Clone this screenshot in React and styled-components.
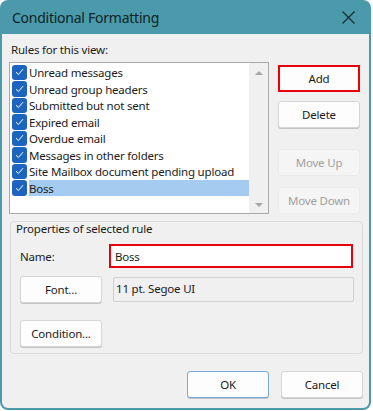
import styled, { createGlobalStyle } from "styled-components";

const GlobalStyle = createGlobalStyle`
  * { margin: 0; padding: 0; box-sizing: border-box; }
  body {
    background: #ffffff;
    font-family: "Noto Sans", "Open Sans", sans-serif;
    font-size: 11.5px;
    letter-spacing: -0.2px;
    color: #1b1b1b;
  }
`;

const Window = styled.div`
  width: 371px;
  height: 410px;
  background: #4a9aab;
  border-radius: 8px;
  padding: 0 2px 2px 2px;
  display: flex;
  flex-direction: column;
  overflow: hidden;
`;

const TitleBar = styled.div`
  height: 34px;
  display: flex;
  align-items: center;
  justify-content: space-between;
  padding: 0 14px 0 10px;
  color: #0f1f24;
  font-size: 14px;
  letter-spacing: -0.25px;
`;

const Body = styled.div`
  flex: 1;
  background: #f0f0f0;
  border-radius: 0 0 6px 6px;
  padding: 8px 9px 0 7px;
  display: flex;
  flex-direction: column;
`;

const Label = styled.div`
  line-height: 16px;
  padding-left: ${(p) => p.$indent || 0}px;
`;

const TopRow = styled.div`
  display: flex;
  margin-top: 4px;
  gap: 9px;
`;

const ListBox = styled.div`
  width: 261px;
  height: 152px;
  border: 1px solid #a9a9a9;
  background: #ffffff;
  display: flex;
`;

const Items = styled.div`
  flex: 1;
  padding: 1px 0 0 2px;
`;

const Item = styled.div`
  height: 16.5px;
  display: flex;
  align-items: center;
  gap: 2px;
`;

const Check = styled.span`
  width: 15px;
  height: 15.5px;
  border-radius: 3px;
  background: #1c64bd;
  display: flex;
  align-items: center;
  justify-content: center;
  flex: none;
`;

const ItemText = styled.span`
  flex: 1;
  height: 16.5px;
  line-height: 17px;
  white-space: nowrap;
  background: ${(p) => (p.$selected ? "#a4ccf0" : "transparent")};
`;

const ScrollBar = styled.div`
  width: 19px;
  background: #f0f0f0;
  display: flex;
  flex-direction: column;
  justify-content: space-between;
  align-items: center;
  padding: 8px 0 6px;
`;

const Arrow = styled.span`
  width: 0;
  height: 0;
  border-left: 4px solid transparent;
  border-right: 4px solid transparent;
  ${(p) => (p.$down ? "border-top" : "border-bottom")}: 4px solid #a6a6a6;
`;

const ButtonColumn = styled.div`
  display: flex;
  flex-direction: column;
  padding-top: 3px;
`;

const Button = styled.div`
  width: ${(p) => p.$w || 82}px;
  height: 27px;
  margin-top: ${(p) => p.$mt || 0}px;
  display: flex;
  align-items: center;
  justify-content: center;
  background: ${(p) => (p.$disabled ? "#f5f5f5" : "#fdfdfd")};
  color: ${(p) => (p.$disabled ? "#a0a0a0" : "#1b1b1b")};
  border: ${(p) =>
    p.$highlight
      ? "2px solid #e8000b"
      : p.$default
      ? "1px solid #74a9d8"
      : p.$disabled
      ? "1px solid #ebebeb"
      : "1px solid #d6d6d6"};
  border-radius: ${(p) => (p.$highlight ? 0 : 3)}px;
  box-shadow: ${(p) =>
    p.$disabled || p.$highlight ? "none" : "0 1px 0 #c4c4c4"};
`;

const Group = styled.div`
  margin: 7px 0 0 1px;
  width: 353px;
  height: 133px;
  border: 1px solid #dadada;
  border-radius: 4px;
  padding: 0 8px 0 9px;
  display: flex;
  flex-direction: column;
`;

const Legend = styled.div`
  line-height: 14px;
  margin: 0 0 8px -4px;
`;

const FieldRow = styled.div`
  display: flex;
  align-items: center;
  margin-top: ${(p) => p.$mt || 0}px;
`;

const NameLabel = styled.div`
  width: 89px;
  padding-top: 1px;
`;

const NameInput = styled.div`
  width: 244px;
  height: 24px;
  border: 2px solid #e8000b;
  background: #ffffff;
  padding-left: 4px;
  display: flex;
  align-items: center;
`;

const FontBox = styled.div`
  margin-left: 11px;
  width: 241px;
  height: 25px;
  border: 1px solid #cfcfcf;
  border-radius: 2px;
  background: #f0f0f0;
  padding: 0 0 3px 2px;
  display: flex;
  align-items: center;
`;

const Footer = styled.div`
  display: flex;
  justify-content: flex-end;
  gap: 12px;
  margin-top: 17px;
  width: 354px;
`;

const CheckMark = () => (
  <svg width="9" height="8" viewBox="0 0 9 8">
    <path d="M1 4.2 L3.4 6.5 L8 1.2" fill="none" stroke="#ffffff" strokeWidth="1" />
  </svg>
);

const CloseIcon = () => (
  <svg width="13" height="13" viewBox="0 0 13 13">
    <path d="M0.5 0.5 L12.5 12.5 M12.5 0.5 L0.5 12.5" stroke="#1a2a2e" strokeWidth="1.2" />
  </svg>
);

const rules = [
  "Unread messages",
  "Unread group headers",
  "Submitted but not sent",
  "Expired email",
  "Overdue email",
  "Messages in other folders",
  "Site Mailbox document pending upload",
  "Boss",
];

export default function App() {
  return (
    <>
      <GlobalStyle />
      <Window>
        <TitleBar>
          <span>Conditional Formatting</span>
          <CloseIcon />
        </TitleBar>
        <Body>
          <Label $indent={2}>Rules for this view:</Label>
          <TopRow>
            <ListBox>
              <Items>
                {rules.map((r) => (
                  <Item key={r}>
                    <Check>
                      <CheckMark />
                    </Check>
                    <ItemText $selected={r === "Boss"}>{r}</ItemText>
                  </Item>
                ))}
              </Items>
              <ScrollBar>
                <Arrow />
                <Arrow $down />
              </ScrollBar>
            </ListBox>
            <ButtonColumn>
              <Button $highlight>Add</Button>
              <Button $mt={9}>Delete</Button>
              <Button $mt={21} $disabled>Move Up</Button>
              <Button $mt={11} $disabled>Move Down</Button>
            </ButtonColumn>
          </TopRow>
          <Group>
            <Legend>Properties of selected rule</Legend>
            <FieldRow>
              <NameLabel>Name:</NameLabel>
              <NameInput>Boss</NameInput>
            </FieldRow>
            <FieldRow $mt={8}>
              <Button>Font...</Button>
              <FontBox>11 pt. Segoe UI</FontBox>
            </FieldRow>
            <FieldRow $mt={17}>
              <Button>Condition...</Button>
            </FieldRow>
          </Group>
          <Footer>
            <Button $default>OK</Button>
            <Button>Cancel</Button>
          </Footer>
        </Body>
      </Window>
    </>
  );
}
